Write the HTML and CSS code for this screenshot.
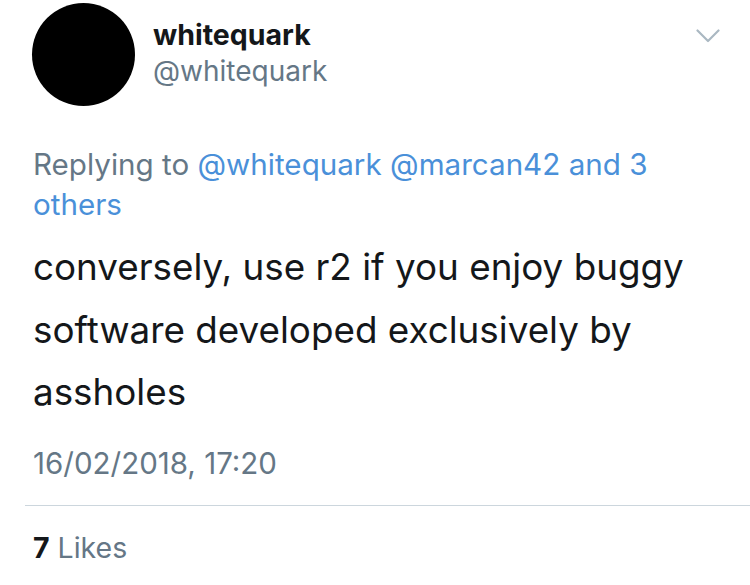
FILE: index.html
```html
<!DOCTYPE html>
<html lang="en">
<head>
    <meta charset="UTF-8">
    <meta name="viewport" content="width=device-width, initial-scale=1.0">
    <title>whitequark on Twitter</title>
    <link rel="stylesheet" href="styles.css">
</head>
<body>
    <div class="tweet">
        <!-- En-tête : avatar, nom, menu -->
        <div class="tweet-header">
            <div class="avatar"></div>
            <div class="author">
                <div class="name">whitequark</div>
                <div class="handle">@whitequark</div>
            </div>
            <svg class="chevron" width="24" height="14" viewBox="0 0 24 14">
                <path d="M1.5 1.5 L12 12 L22.5 1.5" fill="none" stroke="#aab8c2" stroke-width="2.2" stroke-linecap="round" stroke-linejoin="round"/>
            </svg>
        </div>

        <p class="replying">Replying to <a class="link">@whitequark</a> <a class="link">@marcan42</a> <a class="link">and 3</a> <a class="link">others</a></p>

        <p class="text">conversely, use r2 if you enjoy buggy software developed exclusively by assholes</p>

        <div class="date">16/02/2018, 17:20</div>
    </div>

    <div class="stats">
        <span class="count">7</span> Likes
    </div>
</body>
</html>
```

FILE: styles.css
```css
/* Styles globaux */
body, html {
    margin: 0;
    padding: 0;
    background: #fff;
    font-family: 'Inter', 'Roboto', sans-serif;
    color: #14171a;
    overflow: hidden;
}

.tweet {
    padding: 0 28px 0 33px;
}

/* En-tête */
.tweet-header {
    display: flex;
    align-items: flex-start;
    padding-top: 3px;
}

.avatar {
    width: 103px;
    height: 103px;
    margin-left: -1px;
    border-radius: 50%;
    background: #000;
    flex-shrink: 0;
}

.author {
    flex: 1;
    margin-left: 18px;
    padding-top: 14px;
}

.name {
    font-size: 28.5px;
    font-weight: 700;
    line-height: 36px;
}

.handle {
    font-size: 28px;
    line-height: 36px;
    color: #657786;
}

.chevron {
    margin-top: 26px;
    margin-right: 2px;
}

/* Réponse */
.replying {
    margin: 38px 0 0;
    max-width: 640px;
    font-size: 29.6px;
    line-height: 40px;
    color: #657786;
}

.link {
    color: #4a90d9;
    text-decoration: none;
}

.text {
    margin: 12px 0 0;
    font-size: 36.8px;
    line-height: 62.5px;
}

.date {
    margin-top: 19px;
    font-size: 29.5px;
    line-height: 40px;
    color: #657786;
}

/* Compteurs */
.stats {
    margin: 22px 0 0 25px;
    padding: 22px 0 0 8px;
    border-top: 1px solid #ccd6dd;
    font-size: 28.5px;
    line-height: 40px;
    color: #657786;
}

.count {
    font-weight: 700;
    color: #14171a;
}
```
